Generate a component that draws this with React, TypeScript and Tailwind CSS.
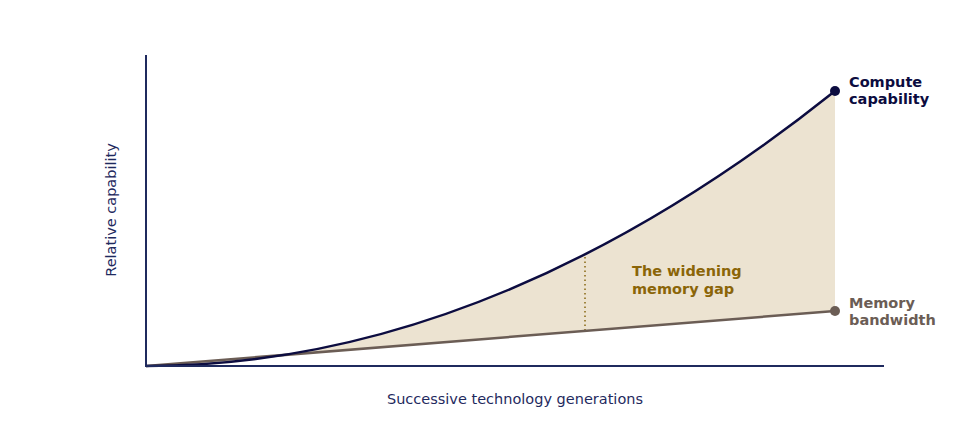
import React from "react";

export default function App() {
  const x0 = 146, y0 = 366, x1 = 835, yC = 91, yM = 311;
  const curve = `M ${x0} ${y0} Q ${(x0 + x1) / 2} ${y0} ${x1} ${yC}`;
  const fill = `M ${x0} ${y0} Q ${(x0 + x1) / 2} ${y0} ${x1} ${yC} L ${x1} ${yM} Z`;
  return (
    <div className="w-[977px] h-[429px] bg-white font-['DejaVu_Sans',Verdana,sans-serif]">
      <svg width="977" height="429" viewBox="0 0 977 429" className="block">
        <path d={fill} fill="#ece3d1" />
        <line x1="585" y1="257" x2="585" y2="331" stroke="#a08540" strokeWidth="2" strokeDasharray="1.5 3" />
        <line x1={x0} y1={y0} x2={x1} y2={yM} stroke="#6b5d55" strokeWidth="2.5" />
        <path d={curve} fill="none" stroke="#0c0c40" strokeWidth="2.5" />
        <line x1={x0} y1="55" x2={x0} y2={y0} stroke="#1f2a5e" strokeWidth="2" />
        <line x1={x0 - 1} y1={y0} x2="884" y2={y0} stroke="#1f2a5e" strokeWidth="2" />
        <circle cx={x1} cy={yC} r="5" fill="#0c0c40" />
        <circle cx={x1} cy={yM} r="5" fill="#6b5d55" />
        <text x="849" y="87" fontSize="14.5" fontWeight="bold" fill="#0c0c40">Compute</text>
        <text x="849" y="104" fontSize="14.5" fontWeight="bold" fill="#0c0c40">capability</text>
        <text x="849" y="308" fontSize="14.5" fontWeight="bold" fill="#6b5d55">Memory</text>
        <text x="849" y="325" fontSize="14.5" fontWeight="bold" fill="#6b5d55">bandwidth</text>
        <text x="632" y="276" fontSize="14.5" fontWeight="bold" fill="#8b6508">The widening</text>
        <text x="632" y="294" fontSize="14.5" fontWeight="bold" fill="#8b6508">memory gap</text>
        <text x="515" y="404" fontSize="14.5" textAnchor="middle" fill="#1f2a5e">Successive technology generations</text>
        <text x="116" y="210" fontSize="14.5" textAnchor="middle" fill="#1f2a5e" transform="rotate(-90 116 210)">Relative capability</text>
      </svg>
    </div>
  );
}
